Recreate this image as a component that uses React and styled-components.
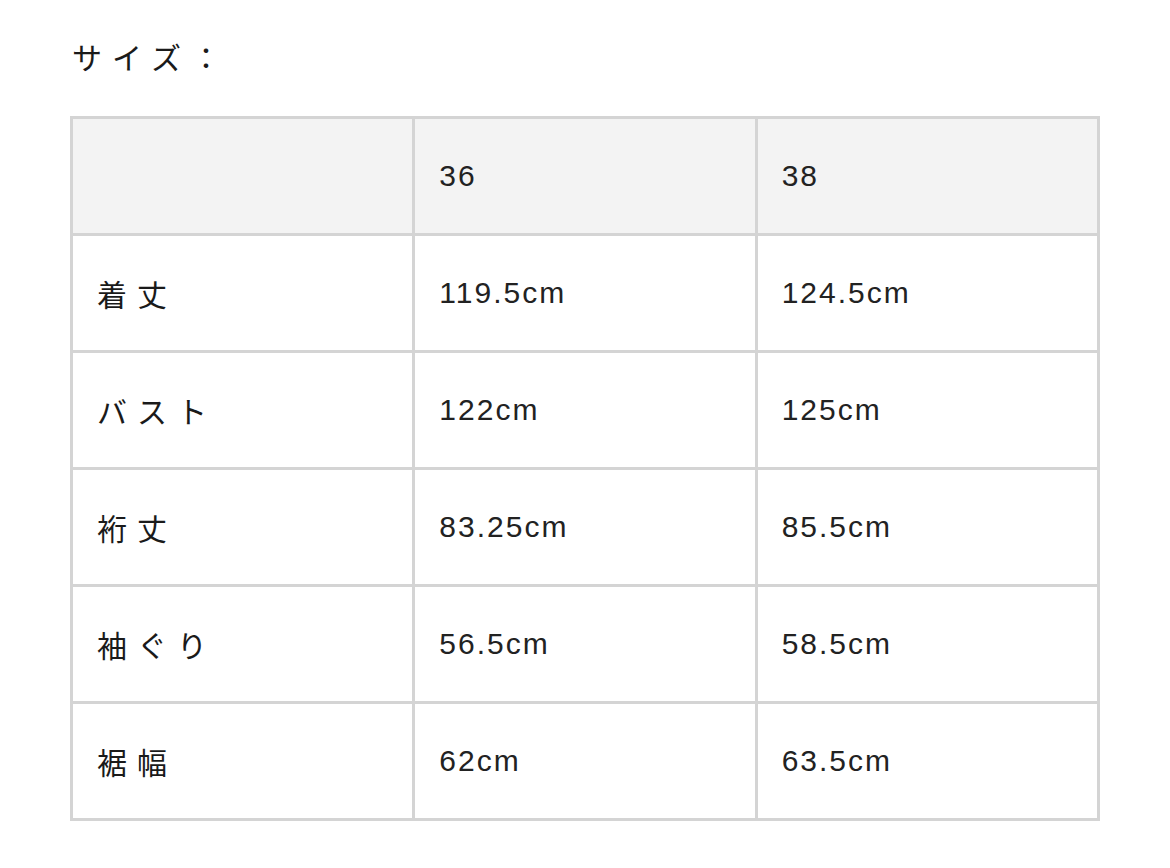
import React from 'react';
import styled, { createGlobalStyle } from 'styled-components';

const GlobalStyle = createGlobalStyle`
    body {
        margin: 0;
        background: #fff;
        font-family: 'Noto Sans CJK JP', 'Noto Sans', sans-serif;
        color: #1a1a1a;
    }
`

const Page = styled.div`
    padding: 34px 70px 40px 70px;
`

const Heading = styled.h2`
    margin: 0 0 37px 2px;
    height: 45px;
    line-height: 45px;
    font-size: 30px;
    font-weight: 400;
    letter-spacing: 10px;
`

const Table = styled.table`
    width: 1030px;
    border-collapse: collapse;
    table-layout: fixed;
`

const Cell = styled.td`
    height: 114px;
    padding: 0 0 0 24px;
    border: 3px solid #d4d4d4;
    background: ${props => props.head ? '#f3f3f3' : '#fff'};
    vertical-align: middle;
    font-size: 30px;
    font-weight: 400;
    letter-spacing: ${props => props.num ? '2px' : '10px'};
    font-family: ${props => props.num
        ? "'Liberation Sans', Arial, sans-serif"
        : "'Noto Sans CJK JP', sans-serif"};
    color: ${props => props.num ? '#222' : '#1a1a1a'};
`

const rows = [
    ['着丈', '119.5cm', '124.5cm'],
    ['バスト', '122cm', '125cm'],
    ['裄丈', '83.25cm', '85.5cm'],
    ['袖ぐり', '56.5cm', '58.5cm'],
    ['裾幅', '62cm', '63.5cm'],
]

export default function App() {
    return (
        <Page>
            <GlobalStyle />
            <Heading>サイズ：</Heading>
            <Table>
                <tbody>
                    <tr>
                        <Cell head />
                        <Cell head num>36</Cell>
                        <Cell head num>38</Cell>
                    </tr>
                    {rows.map(([label, a, b]) => (
                        <tr key={label}>
                            <Cell>{label}</Cell>
                            <Cell num>{a}</Cell>
                            <Cell num>{b}</Cell>
                        </tr>
                    ))}
                </tbody>
            </Table>
        </Page>
    );
}
